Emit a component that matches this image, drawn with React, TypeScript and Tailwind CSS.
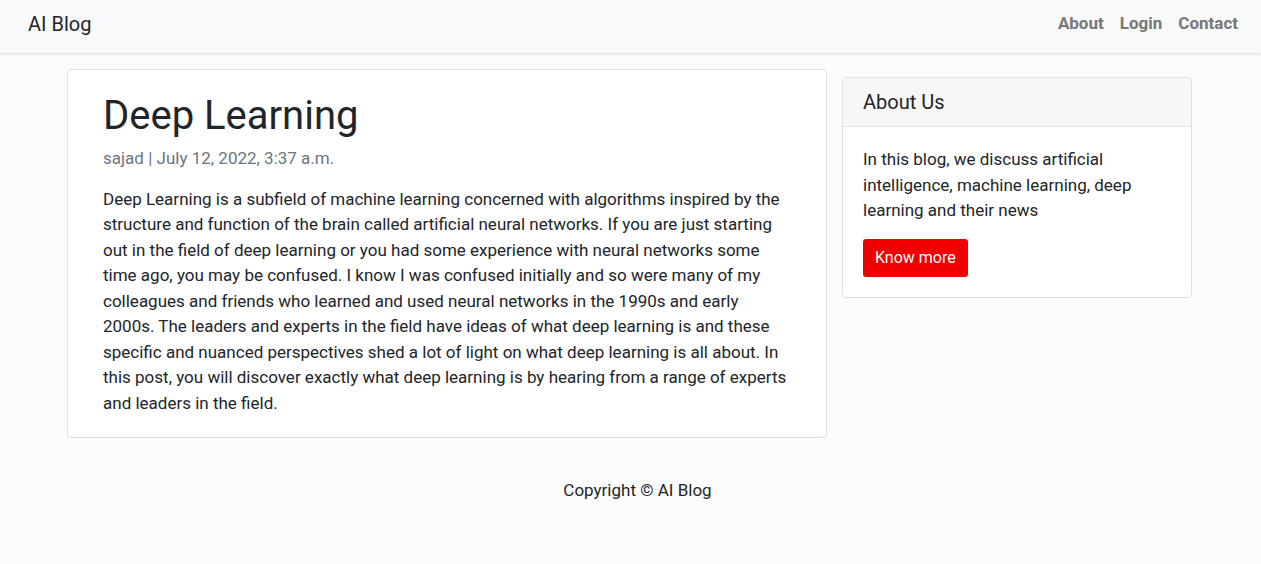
const Navbar = () => {
  return (
    <nav className="h-[53px] bg-[#f8f9fa] shadow-[0_1px_3px_rgba(0,0,0,0.15)] flex items-center justify-between pl-[28px] pr-[23px]">
      <a className="text-[20px] text-[#212529] leading-none -mt-[5px]">AI Blog</a>
      <div className="flex items-center gap-[16px] text-[17px] font-bold text-[#777] -mt-[5px]">
        <a>About</a>
        <a>Login</a>
        <a>Contact</a>
      </div>
    </nav>
  );
};

const Post = () => {
  return (
    <div className="w-[760px] mt-[16px] bg-white border border-[#dfdfdf] rounded-[4px] pl-[35px] pr-[35px] pt-[22px] pb-[21px]">
      <h1 className="text-[40px] leading-[1.2] text-[#212529]">Deep Learning</h1>
      <p className="mt-[6px] text-[17px] leading-[1.5] text-[#6c757d]">
        sajad | July 12, 2022, 3:37 a.m.
      </p>
      <p className="mt-[15px] text-[17px] leading-[25.5px] text-[#212529]">
        Deep Learning is a subfield of machine learning concerned with algorithms inspired by the
        structure and function of the brain called artificial neural networks. If you are just
        starting out in the field of deep learning or you had some experience with neural networks
        some time ago, you may be confused. I know I was confused initially and so were many of my
        colleagues and friends who learned and used neural networks in the 1990s and early 2000s.
        The leaders and experts in the field have ideas of what deep learning is and these specific
        and nuanced perspectives shed a lot of light on what deep learning is all about. In this
        post, you will discover exactly what deep learning is by hearing from a range of experts and
        leaders in the field.
      </p>
    </div>
  );
};

const Sidebar = () => {
  return (
    <div className="w-[350px] mt-[24px] bg-white border border-[#dfdfdf] rounded-[4px] self-start">
      <div className="bg-[#f7f7f7] border-b border-[#dfdfdf] px-[20px] py-[12px] text-[20px] leading-[1.2] text-[#212529] rounded-t-[4px]">
        About Us
      </div>
      <div className="px-[20px] pt-[20px] pb-[20px]">
        <p className="text-[17px] leading-[25.5px] text-[#212529]">
          In this blog, we discuss artificial intelligence, machine learning, deep learning and
          their news
        </p>
        <button className="mt-[15px] h-[38px] px-[12px] bg-[#f00000] text-white text-[16px] rounded-[3px]">
          Know more
        </button>
      </div>
    </div>
  );
};

export default function App() {
  return (
    <div className="min-h-[564px] bg-[#fcfcfc] font-['Roboto',sans-serif]">
      <Navbar />
      <div className="flex gap-[15px] pl-[67px]">
        <Post />
        <Sidebar />
      </div>
      <footer className="mt-[40px] pl-[14px] text-center text-[17px] leading-[1.5] text-[#212529]">
        Copyright © AI Blog
      </footer>
    </div>
  );
}
